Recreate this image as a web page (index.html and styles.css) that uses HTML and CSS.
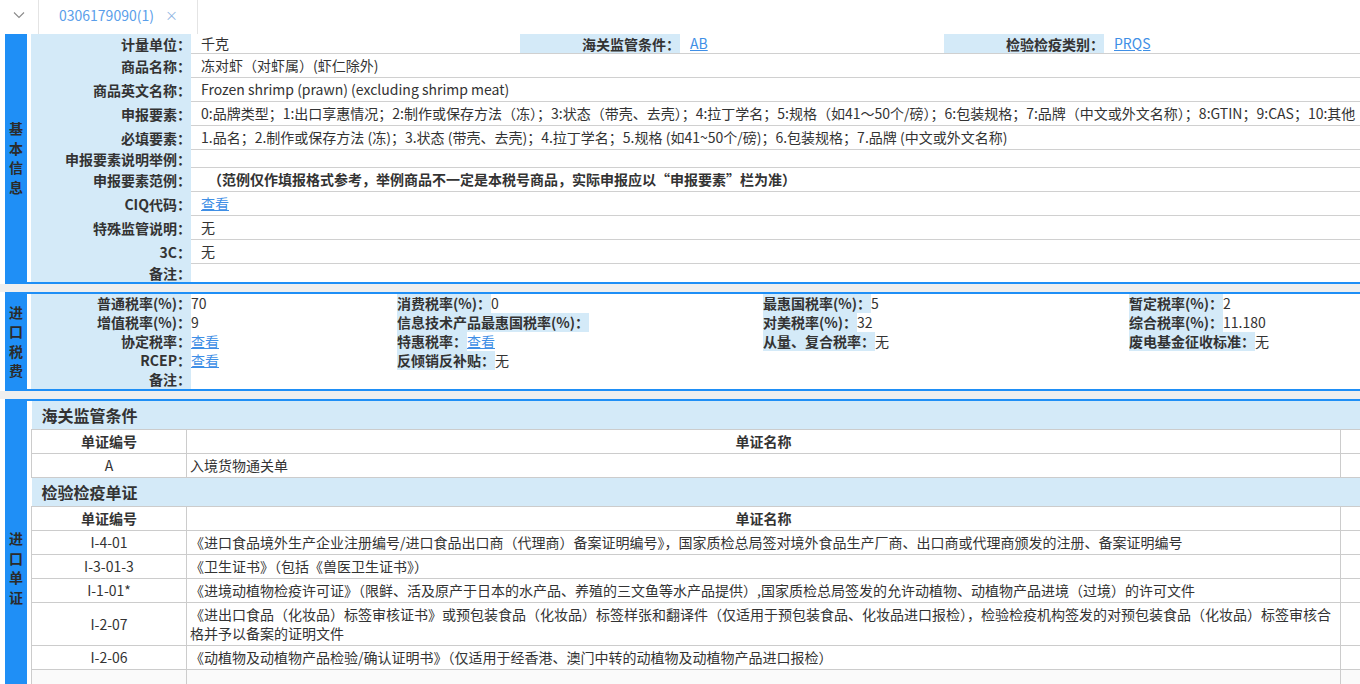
FILE: index.html
```html
<!DOCTYPE html>
<html lang="zh-CN">
<head>
<meta charset="utf-8">
<title>0306179090(1)</title>
<link rel="stylesheet" href="styles.css">
</head>
<body>
<div class="tabbar">
  <div class="tab-toggle">
    <svg width="12" height="8" viewBox="0 0 12 8"><path d="M1 1.5 L6 6.5 L11 1.5" fill="none" stroke="#8a8a8a" stroke-width="1.1"/></svg>
  </div>
  <div class="tab active"><span class="tab-title">0306179090(1)</span><span class="tab-close">×</span></div>
  <div class="tab-rest"></div>
</div>

<div class="main">
  <section class="section">
    <div class="panel panel-basic">
      <div class="side"><span>基</span><span>本</span><span>信</span><span>息</span></div>
      <div class="gutter"></div>
      <div class="body">
        <div class="row row-first">
          <div class="label">计量单位：</div><div class="value">千克</div>
          <div class="label mid">海关监管条件：</div><div class="value"><a href="#" class="link">AB</a></div>
          <div class="label mid">检验检疫类别：</div><div class="value"><a href="#" class="link">PRQS</a></div>
        </div>
        <div class="row"><div class="label">商品名称：</div><div class="value">冻对虾（对虾属）(虾仁除外)</div></div>
        <div class="row"><div class="label">商品英文名称：</div><div class="value">Frozen shrimp (prawn) (excluding shrimp meat)</div></div>
        <div class="row"><div class="label">申报要素：</div><div class="value">0:品牌类型；1:出口享惠情况；2:制作或保存方法（冻）；3:状态（带壳、去壳）；4:拉丁学名；5:规格（如41～50个/磅）；6:包装规格；7:品牌（中文或外文名称）；8:GTIN；9:CAS；10:其他</div></div>
        <div class="row"><div class="label">必填要素：</div><div class="value">1.品名；2.制作或保存方法 (冻)；3.状态 (带壳、去壳)；4.拉丁学名；5.规格 (如41~50个/磅)；6.包装规格；7.品牌 (中文或外文名称)</div></div>
        <div class="row"><div class="label">申报要素说明举例：</div><div class="value"></div></div>
        <div class="row"><div class="label">申报要素范例：</div><div class="value strong">　（范例仅作填报格式参考，举例商品不一定是本税号商品，实际申报应以“申报要素”栏为准）</div></div>
        <div class="row"><div class="label">CIQ代码：</div><div class="value"><a href="#" class="link">查看</a></div></div>
        <div class="row"><div class="label">特殊监管说明：</div><div class="value">无</div></div>
        <div class="row"><div class="label">3C：</div><div class="value">无</div></div>
        <div class="row row-last"><div class="label">备注：</div><div class="value"></div></div>
      </div>
    </div>
  </section>

  <section class="section">
    <div class="panel panel-top">
      <div class="side"><span>进</span><span>口</span><span>税</span><span>费</span></div>
      <div class="gutter"></div>
      <div class="body tax">
        <div class="tcell first"><span class="flabel">普通税率(%)：</span>70</div>
        <div class="tcell"><span class="tlabel">消费税率(%)：</span>0</div>
        <div class="tcell"><span class="tlabel">最惠国税率(%)：</span>5</div>
        <div class="tcell"><span class="tlabel">暂定税率(%)：</span>2</div>

        <div class="tcell first"><span class="flabel">增值税率(%)：</span>9</div>
        <div class="tcell"><span class="tlabel">信息技术产品最惠国税率(%)：</span></div>
        <div class="tcell"><span class="tlabel">对美税率(%)：</span>32</div>
        <div class="tcell"><span class="tlabel">综合税率(%)：</span>11.180</div>

        <div class="tcell first"><span class="flabel">协定税率：</span><a href="#" class="link">查看</a></div>
        <div class="tcell"><span class="tlabel">特惠税率：</span><a href="#" class="link">查看</a></div>
        <div class="tcell"><span class="tlabel">从量、复合税率：</span>无</div>
        <div class="tcell"><span class="tlabel">废电基金征收标准：</span>无</div>

        <div class="tcell first"><span class="flabel">RCEP：</span><a href="#" class="link">查看</a></div>
        <div class="tcell"><span class="tlabel">反倾销反补贴：</span>无</div>
        <div class="tcell"></div>
        <div class="tcell"></div>

        <div class="tcell first"><span class="flabel">备注：</span></div>
        <div class="tcell"></div>
        <div class="tcell"></div>
        <div class="tcell"></div>
      </div>
    </div>
  </section>

  <section class="section">
    <div class="panel panel-top panel-docs">
      <div class="side"><span>进</span><span>口</span><span>单</span><span>证</span></div>
      <div class="gutter"></div>
      <div class="body">
        <table class="doc-table">
          <colgroup><col class="c-code"><col class="c-name"><col class="c-extra"></colgroup>
          <tr class="heading"><th colspan="3">海关监管条件</th></tr>
          <tr class="head"><th>单证编号</th><th>单证名称</th><th></th></tr>
          <tr><td class="code">A</td><td>入境货物通关单</td><td></td></tr>
          <tr class="heading"><th colspan="3">检验检疫单证</th></tr>
          <tr class="head"><th>单证编号</th><th>单证名称</th><th></th></tr>
          <tr><td class="code">I-4-01</td><td>《进口食品境外生产企业注册编号/进口食品出口商（代理商）备案证明编号》，国家质检总局签对境外食品生产厂商、出口商或代理商颁发的注册、备案证明编号</td><td></td></tr>
          <tr><td class="code">I-3-01-3</td><td>《卫生证书》（包括《兽医卫生证书》）</td><td></td></tr>
          <tr><td class="code">I-1-01*</td><td>《进境动植物检疫许可证》（限鲜、活及原产于日本的水产品、养殖的三文鱼等水产品提供）,国家质检总局签发的允许动植物、动植物产品进境（过境）的许可文件</td><td></td></tr>
          <tr><td class="code">I-2-07</td><td>《进出口食品（化妆品）标签审核证书》或预包装食品（化妆品）标签样张和翻译件（仅适用于预包装食品、化妆品进口报检），检验检疫机构签发的对预包装食品（化妆品）标签审核合格并予以备案的证明文件</td><td></td></tr>
          <tr><td class="code">I-2-06</td><td>《动植物及动植物产品检验/确认证明书》（仅适用于经香港、澳门中转的动植物及动植物产品进口报检）</td><td></td></tr>
          <tr class="shade"><td class="code">&nbsp;</td><td></td><td></td></tr>
        </table>
      </div>
    </div>
  </section>
</div>
</body>
</html>
```

FILE: styles.css
```css
html, body {
  margin: 0;
  padding: 0;
  overflow: hidden;
  background: #ffffff;
}

body {
  font-family: "Noto Sans CJK SC", "Microsoft YaHei", sans-serif;
  font-size: 14px;
  color: #333333;
}

/* ---------- tab bar ---------- */
.tabbar {
  display: flex;
  height: 34px;
  background: #ffffff;
}

.tab-toggle {
  width: 38px;
  display: flex;
  align-items: center;
  justify-content: center;
  padding-bottom: 5px;
  box-sizing: border-box;
}

.tab {
  width: 160px;
  box-sizing: border-box;
  border-left: 1px solid #e4e4e4;
  border-right: 1px solid #e4e4e4;
  display: flex;
  align-items: center;
  padding-left: 20px;
  padding-bottom: 5px;
}

.tab-title {
  color: #5a9eea;
  font-size: 14px;
}

.tab-close {
  color: #8fb4e2;
  font-size: 13px;
  margin-left: 11px;
}

.tab-rest {
  flex: 1;
}

/* ---------- sections ---------- */
.main {
  width: 1500px;
  background: #efefef;
}

.section {
  background: #ffffff;
  padding-left: 5px;
  margin-bottom: 8px;
}

.panel {
  display: flex;
  border-bottom: 2px solid #1f8ff6;
}

.panel-top {
  border-top: 2px solid #1f8ff6;
}

.panel-docs {
  border-bottom: 0;
  min-height: 334px;
}

.side {
  width: 22px;
  flex: none;
  background: #1f8ff6;
  display: flex;
  flex-direction: column;
  justify-content: center;
  align-items: center;
  font-weight: bold;
  font-size: 14px;
  line-height: 19.5px;
  color: #2b2b2b;
}

.gutter {
  width: 4px;
  flex: none;
  background: #ffffff;
}

.body {
  width: 1469px;
  flex: none;
}

/* ---------- basic info rows ---------- */
.row {
  display: grid;
  grid-template-columns: 160px 1fr;
}

.row-first {
  grid-template-columns: 160px 329px 160px 264px 160px 1fr;
}

.label {
  background: #d4eaf8;
  font-weight: bold;
  white-space: nowrap;
  display: flex;
  align-items: center;
  justify-content: flex-end;
  line-height: 18px;
}

.label.mid {
  border-bottom: 1px solid #d0d0d0;
}

.value {
  padding: 2px 10px;
  line-height: 19px;
  border-bottom: 1px solid #d0d0d0;
  white-space: nowrap;
  overflow: hidden;
}

.row-first .value {
  padding-top: 0;
  padding-bottom: 0;
}

.row-last .value {
  border-bottom: 0;
}

.value.strong {
  font-weight: bold;
}

.link {
  color: #3f8fe6;
  text-decoration: underline;
}

/* ---------- tax grid ---------- */
.tax {
  display: grid;
  grid-template-columns: repeat(4, 366px);
  grid-auto-rows: 19px;
  line-height: 19px;
}

.tcell {
  white-space: nowrap;
  overflow: hidden;
}

.tcell.first {
  display: flex;
}

.flabel {
  display: inline-block;
  width: 160px;
  flex: none;
  text-align: right;
  background: #d4eaf8;
  font-weight: bold;
}

.tlabel {
  display: inline-block;
  background: #d4eaf8;
  font-weight: bold;
}

/* ---------- documents table ---------- */
.doc-table {
  border-collapse: collapse;
  table-layout: fixed;
  width: 1469px;
}

.c-code { width: 155px; }
.c-name { width: 1154px; }
.c-extra { width: 160px; }

.doc-table td,
.doc-table th {
  border: 1px solid #cccccc;
  padding: 2px 3px;
  line-height: 19px;
  vertical-align: middle;
}

.doc-table td {
  text-align: left;
  font-weight: normal;
}

.doc-table .head th {
  text-align: center;
  font-weight: bold;
}

.doc-table td.code {
  text-align: center;
}

.doc-table .heading th {
  background: #d4eaf8;
  border-top: 0;
  border-left: 0;
  border-right: 0;
  height: 24px;
  text-align: left;
  padding: 2px 10px;
  font-size: 16px;
  font-weight: bold;
  line-height: 24px;
}

.doc-table .shade td {
  background: #fafafa;
}
```
